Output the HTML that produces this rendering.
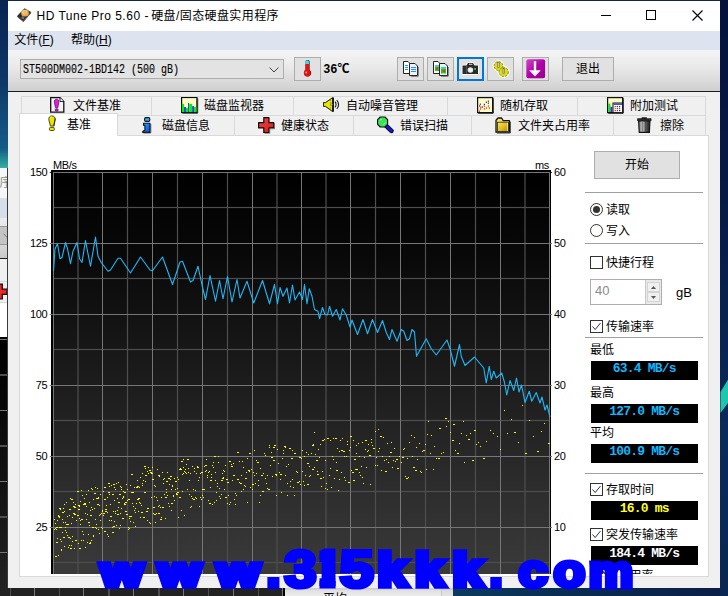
<!DOCTYPE html>
<html lang="zh-CN">
<head>
<meta charset="utf-8">
<title>HD Tune Pro 5.60 - 硬盘/固态硬盘实用程序</title>
<style>
html,body{margin:0;padding:0;}
body{width:728px;height:596px;overflow:hidden;position:relative;background:#0b1f45;font-family:"Liberation Sans","Noto Sans CJK SC",sans-serif;font-size:12px;color:#000;}
.abs{position:absolute;}
.t{position:absolute;white-space:nowrap;line-height:16px;height:16px;font-size:12px;}
#win{position:absolute;left:8px;top:0;width:712px;height:588px;background:#f0f0f0;overflow:hidden;}
#title{position:absolute;left:0;top:0;width:712px;height:31px;background:#fff;}
#menu{position:absolute;left:0;top:31px;width:712px;height:19px;background:#dde4ef;}
#tool{position:absolute;left:0;top:50px;width:712px;height:41px;background:linear-gradient(#f4f4f4,#eaeaea 40%,#cfcfcf);}
#toolline{position:absolute;left:0;top:91px;width:712px;height:1px;background:#1c1c1c;}
.tb{position:absolute;top:57px;width:25px;height:22px;border:1px solid #adadad;background:#e1e1e1;}
.tab{position:absolute;border:1px solid #d9d9d9;background:#f0f0f0;box-sizing:border-box;}
.lcd{position:absolute;left:582.5px;width:107.5px;height:19px;background:#000;text-align:center;overflow:hidden;}
.lcd span{display:inline-block;font-family:"Liberation Mono",monospace;font-weight:bold;font-size:13px;line-height:13px;letter-spacing:-0.8px;margin-top:1px;}
.sep{position:absolute;left:577px;width:118px;height:1px;background:#a0a0a0;}
.cb{position:absolute;left:582px;width:11px;height:11px;border:1px solid #333;background:#fff;}
.rb{position:absolute;left:582px;width:11px;height:11px;border:1px solid #333;border-radius:50%;background:#fff;}
</style>
</head>
<body>
<!-- desktop + background windows -->
<div class="abs" style="left:0;top:0;width:8px;height:168px;background:linear-gradient(#0a2450,#0c3566 45%,#155a86 88%,#2a9a9a 97%,#3ab0a8);"></div>
<div class="abs" style="left:0;top:168px;width:8px;height:30px;background:#f4f6f8;"></div>
<div class="abs" style="left:0;top:168px;width:8px;height:30px;overflow:hidden;"><div class="t" style="right:-3.5px;top:6.5px;color:#8c8c8c;">HD Tune Pro 5.60 - 硬盘/固态硬盘实用程序</div></div>
<div class="abs" style="left:0;top:198px;width:8px;height:20px;background:#d6deea;"></div>
<div class="abs" style="left:0;top:218px;width:8px;height:41px;background:linear-gradient(#ececec,#e2e2e2 40%,#c8c8c8);"></div>
<div class="abs" style="left:0;top:226px;width:8px;height:19px;background:#c4c4c4;border-top:1px solid #9a9a9a;border-bottom:1px solid #9a9a9a;box-sizing:border-box;"></div>
<svg class="abs" style="left:3px;top:233px;" width="5" height="6" viewBox="0 0 5 6"><path d="M0.5 0.8L5 5.2" fill="none" stroke="#777" stroke-width="1"/></svg>
<div class="abs" style="left:0;top:258px;width:8px;height:1px;background:#1c1c1c;"></div>
<div class="abs" style="left:0;top:259px;width:8px;height:44px;background:#f0f0f0;"></div>
<div class="abs" style="left:0;top:281px;width:8px;height:1px;background:#d9d9d9;"></div>
<div class="abs" style="left:0;top:302px;width:8px;height:1px;background:#d9d9d9;"></div>
<div class="abs" style="left:0;top:303px;width:8px;height:34px;background:#fff;"></div>
<svg class="abs" style="left:0;top:283px;" width="8" height="18" viewBox="0 0 8 18"><path d="M-2 1.2h4.3v5H7v5.2H2.3v4.6H-2z" fill="#e42828" stroke="#0a0a0a" stroke-width="1.2"/></svg>
<div class="abs" style="left:0;top:337px;width:8px;height:259px;background:linear-gradient(#000,#080808 31%,#232323);"></div>
<div class="abs" style="left:0;top:339px;width:8px;height:1px;background:#767676;"></div>
<div class="abs" style="left:0;top:374.4px;width:8px;height:1.2px;background:#4e4e4e;"></div>
<div class="abs" style="left:0;top:410px;width:8px;height:1px;background:#767676;"></div>
<div class="abs" style="left:0;top:445.4px;width:8px;height:1.2px;background:#4e4e4e;"></div>
<div class="abs" style="left:0;top:481px;width:8px;height:1px;background:#767676;"></div>
<div class="abs" style="left:0;top:516.4px;width:8px;height:1.2px;background:#4e4e4e;"></div>
<div class="abs" style="left:0;top:552px;width:8px;height:1px;background:#767676;"></div>
<div class="abs" style="left:7px;top:168px;width:1px;height:428px;background:#3a3a3a;"></div>
<!-- bottom strip -->
<div class="abs" style="left:0;top:588px;width:285px;height:8px;background:#222;"></div>
<div class="abs" style="left:9.9px;top:588px;width:1.2px;height:8px;background:#4e4e4e;"></div>
<div class="abs" style="left:34px;top:588px;width:1px;height:8px;background:#767676;"></div>
<div class="abs" style="left:58.9px;top:588px;width:1.2px;height:8px;background:#4e4e4e;"></div>
<div class="abs" style="left:83px;top:588px;width:1px;height:8px;background:#767676;"></div>
<div class="abs" style="left:108.4px;top:588px;width:1.2px;height:8px;background:#4e4e4e;"></div>
<div class="abs" style="left:133px;top:588px;width:1px;height:8px;background:#767676;"></div>
<div class="abs" style="left:158.4px;top:588px;width:1.2px;height:8px;background:#4e4e4e;"></div>
<div class="abs" style="left:183px;top:588px;width:1px;height:8px;background:#767676;"></div>
<div class="abs" style="left:207.9px;top:588px;width:1.2px;height:8px;background:#4e4e4e;"></div>
<div class="abs" style="left:233px;top:588px;width:1px;height:8px;background:#767676;"></div>
<div class="abs" style="left:257.6px;top:588px;width:1.2px;height:8px;background:#4e4e4e;"></div>
<div class="abs" style="left:282px;top:588px;width:1px;height:8px;background:#767676;"></div>
<div class="abs" style="left:283px;top:588px;width:2px;height:8px;background:#000;"></div>
<div class="abs" style="left:285px;top:588px;width:168px;height:8px;background:linear-gradient(#c8c8c8,#e2e2e2 35%,#ececec);overflow:hidden;"><div class="t" style="left:38px;top:3.2px;">平均</div></div>
<div class="abs" style="left:441px;top:588px;width:12px;height:8px;background:linear-gradient(#c4c4c4,#dcdcdc 35%,#e4e4e4);border-left:1px solid #c8c8c8;box-sizing:border-box;"></div>
<div class="abs" style="left:453px;top:588px;width:275px;height:8px;background:linear-gradient(90deg,#0b3a5c,#0a2a50 50%,#0a1e46);"></div>
<!-- right desktop strip -->
<div class="abs" style="left:720px;top:0;width:8px;height:596px;background:linear-gradient(#04123c,#071c48 40%,#0a2a5a 72%,#0a2652);"></div>
<svg class="abs" style="left:720px;top:360px;" width="8" height="60" viewBox="0 0 8 60"><polygon points="0.5,32 8,19.5 8,43 0.5,53" fill="#1fc6ae"/></svg>

<!-- main window -->
<div id="win">
  <div class="abs" style="left:0;top:0;width:712px;height:1px;background:#16284a;z-index:5;"></div>
  <div id="title">
    <svg class="abs" style="left:9px;top:7px;" width="16" height="16" viewBox="0 0 16 16">
      <polygon points="7.5,1.2 14.1,5.1 6.4,14.2 0.1,8.9" fill="#2c2c30"/>
      <polygon points="0.1,8.9 6.4,14.2 6.4,15 0.1,9.7" fill="#111"/>
      <polygon points="14.1,5.1 6.4,14.2 6.4,15 14.1,5.9" fill="#1a1a1a"/>
      <ellipse cx="8" cy="5.9" rx="3.9" ry="3.5" fill="#e8a840"/>
      <ellipse cx="7.6" cy="5.3" rx="2.6" ry="2.2" fill="#f6c870"/>
      <circle cx="8.1" cy="5.7" r="1.1" fill="#b8b8c0"/>
      <polygon points="5.2,9 7.6,10.2 6.4,12.4 4.2,11" fill="#77777c"/>
    </svg>
    <div class="t" style="left:28.5px;top:8px;"><span style="letter-spacing:0.5px;">HD Tune Pro 5.60 - </span><span style="letter-spacing:0.4px;margin-left:-1.5px;">硬盘/固态硬盘实用程序</span></div>
    <svg class="abs" style="left:593px;top:10px;" width="110" height="11" viewBox="0 0 110 11" fill="none" stroke="#000" stroke-width="1">
      <path d="M0 5.5H10"/>
      <rect x="45.5" y="0.5" width="9" height="9"/>
      <path d="M91.5 0.5L101.5 10.5M101.5 0.5L91.5 10.5" stroke-width="1.1"/>
    </svg>
  </div>
  <div id="menu">
    <div class="t" style="left:6.3px;top:1px;">文件(<u>F</u>)</div>
    <div class="t" style="left:63px;top:1px;">帮助(<u>H</u>)</div>
  </div>
  <div id="tool"></div>
  <div id="toolline"></div>
  <!-- combo -->
  <div class="abs" style="left:12px;top:59px;width:262px;height:18px;border:1px solid #adadad;background:#e3e3e3;">
    <div class="abs" style="left:2px;top:3px;height:14px;line-height:14px;font-family:'Liberation Mono',monospace;font-size:13px;white-space:nowrap;transform:scaleX(0.769);transform-origin:0 0;-webkit-text-stroke:0.12px #000;">ST500DM002-1BD142 (500 gB)</div>
    <svg class="abs" style="left:248px;top:7px;" width="10" height="6" viewBox="0 0 10 6"><path d="M0.5 0.5L5 5L9.5 0.5" fill="none" stroke="#444" stroke-width="1"/></svg>
  </div>
  <!-- temperature -->
  <div class="tb" style="left:286px;">
    <svg class="abs" style="left:8px;top:2px;" width="10" height="18" viewBox="0 0 10 18">
      <path d="M2.6 1.8a2 2 0 0 1 4 0V10a3.6 3.6 0 1 1-4 0z" fill="#1a1a1a"/>
      <path d="M2.4 1.6a1.9 1.9 0 0 1 3.6 0V4H2.4z" fill="#40d8e8"/>
      <rect x="2.4" y="4" width="3.6" height="7" fill="#e81010"/>
      <circle cx="4.2" cy="13" r="3.4" fill="#e81010"/>
      <circle cx="3.2" cy="12.4" r="0.9" fill="#ffb0b0"/>
    </svg>
  </div>
  <div class="t" style="left:315.5px;top:60.5px;font-weight:bold;font-size:12px;letter-spacing:0.35px;">36℃</div>
  <!-- toolbar buttons -->
  <div class="tb" style="left:389px;">
    <svg class="abs" style="left:5px;top:3px;" width="17" height="16" viewBox="0 0 17 16"><path d="M0.5 0.5h4.5l2 2v10h-6.5z" fill="#fff" stroke="#222"/><path d="M6.5 2.5h5.5l2.5 2.5v9.5h-8z" fill="#f2f2f2" stroke="#222"/><path d="M15.2 6v9.2H8" fill="none" stroke="#444" stroke-width="0.8"/><path d="M2 4.5h3M2 6.5h3M2 8.5h3M8 6.5h5M8 8.5h5M8 10.5h5" stroke="#1e90ff"/></svg>
  </div>
  <div class="tb" style="left:419px;">
    <svg class="abs" style="left:5px;top:3px;" width="17" height="16" viewBox="0 0 17 16"><path d="M0.5 0.5h4.5l2 2v10h-6.5z" fill="#fff" stroke="#222"/><path d="M6.5 2.5h5.5l2.5 2.5v9.5h-8z" fill="#f2f2f2" stroke="#222"/><path d="M15.2 6v9.2H8" fill="none" stroke="#444" stroke-width="0.8"/><rect x="2" y="4" width="4" height="1.5" fill="#30c8e8"/><rect x="2" y="5.5" width="4" height="4.5" fill="#30c030"/><rect x="3.2" y="6.5" width="1.8" height="2" fill="#e83020"/><rect x="8" y="6" width="5" height="1.5" fill="#30c8e8"/><rect x="8" y="7.5" width="5" height="5" fill="#30c030"/><rect x="9.8" y="8.8" width="2" height="2.2" fill="#e83020"/></svg>
  </div>
  <div class="tb" style="left:449px;border:2px solid #0078d7;width:23px;height:20px;">
    <svg class="abs" style="left:2px;top:2px;" width="19" height="14" viewBox="0 0 19 14"><path d="M1.5 4.5h4L7 2h5l1.5 2.5h3.5v8.5H1.5z" fill="#2a2a2a" stroke="#fff" stroke-width="1.6" stroke-linejoin="round"/><path d="M1.5 4.5h4L7 2h5l1.5 2.5h3.5v8.5H1.5z" fill="#2a2a2a"/><rect x="8" y="2.8" width="3.4" height="1" fill="#ddd"/><path d="M5.3 5v7.6" stroke="#777" stroke-width="0.6"/><circle cx="9.4" cy="9" r="2.8" fill="#e6e6e6"/><circle cx="9.4" cy="9" r="1.2" fill="#f8f8f8"/><rect x="13.2" y="7" width="1.8" height="1.8" fill="#20e040"/></svg>
  </div>
  <div class="tb" style="left:479px;">
    <svg class="abs" style="left:4px;top:2px;" width="18" height="18" viewBox="0 0 18 18"><g stroke="#fff" stroke-width="2.4" fill="#fff"><circle cx="6.5" cy="6" r="4.6"/><circle cx="11.7" cy="12" r="4.8"/></g><circle cx="6.5" cy="6" r="4.4" fill="#dcdc10" stroke="#8a8a00" stroke-width="1" stroke-dasharray="2.2 1.2"/><circle cx="11.7" cy="12" r="4.6" fill="#dcdc10" stroke="#8a8a00" stroke-width="1" stroke-dasharray="2.2 1.2"/><rect x="5.7" y="2.5" width="1.7" height="5" fill="#c8c8d8" stroke="#555" stroke-width="0.5"/><rect x="10.9" y="8.5" width="1.7" height="5" fill="#c8c8d8" stroke="#555" stroke-width="0.5"/></svg>
  </div>
  <div class="tb" style="left:514px;">
    <svg class="abs" style="left:3px;top:1px;" width="20" height="20" viewBox="0 0 20 20"><defs><linearGradient id="mg" x1="0" y1="0" x2="1" y2="1"><stop offset="0" stop-color="#d048c8"/><stop offset="0.5" stop-color="#b000a8"/><stop offset="1" stop-color="#98008e"/></linearGradient></defs><rect x="0.3" y="0.3" width="18.8" height="19" rx="2" fill="url(#mg)"/><rect x="7.8" y="2.2" width="2.4" height="11" fill="#fff"/><path d="M3.2 11.2h11.6L9 17.4z" fill="#fff"/></svg>
  </div>
  <div class="tb" style="left:554px;width:50px;"><div class="t" style="left:0;top:3px;width:50px;text-align:center;">退出</div></div>

  <!-- tabs row 1 -->
  <div class="tab" style="left:13px;top:96px;width:131px;height:20px;border-bottom:none;"></div>
  <div class="tab" style="left:143px;top:96px;width:143px;height:20px;border-bottom:none;"></div>
  <div class="tab" style="left:285px;top:96px;width:155px;height:20px;border-bottom:none;"></div>
  <div class="tab" style="left:439px;top:96px;width:131px;height:20px;border-bottom:none;"></div>
  <div class="tab" style="left:569px;top:96px;width:129px;height:20px;border-bottom:none;"></div>
  <!-- tabs row 2 -->
  <div class="tab" style="left:109px;top:115px;width:118px;height:21px;"></div>
  <div class="tab" style="left:226px;top:115px;width:120px;height:21px;"></div>
  <div class="tab" style="left:345px;top:115px;width:119px;height:21px;"></div>
  <div class="tab" style="left:463px;top:115px;width:143px;height:21px;"></div>
  <div class="tab" style="left:605px;top:115px;width:93px;height:21px;"></div>
  <!-- page -->
  <div class="abs" style="left:11px;top:135px;width:688px;height:440px;background:#fff;border:1px solid #d9d9d9;"></div>
  <!-- selected tab -->
  <div class="abs" style="left:11px;top:113px;width:99px;height:23px;background:#fff;border:1px solid #d9d9d9;border-bottom:none;box-sizing:border-box;"></div>

  <!-- tab labels row 1 -->
  <svg class="abs" style="left:42px;top:97px;" width="16" height="16" viewBox="0 0 16 16"><path d="M0.7 0.7h9.3l3.8 3.8v10.6h-13.1z" fill="#f4f4f4" stroke="#111" stroke-width="1.3"/><path d="M10 0.7v3.8h3.8" fill="#fff" stroke="#111" stroke-width="0.9"/><path d="M6.6 2.2c1.6 0 2.4 1.2 2.2 2.8l-1 5.6h-2.4l-1-5.6c-0.2-1.6 0.6-2.8 2.2-2.8z" fill="#e818e8" stroke="#500050" stroke-width="0.7"/><rect x="5.2" y="11.8" width="2.9" height="2.3" rx="0.8" fill="#e818e8" stroke="#500050" stroke-width="0.7"/></svg>
  <div class="t" style="left:65px;top:98px;">文件基准</div>
  <svg class="abs" style="left:173px;top:97px;" width="18" height="17" viewBox="0 0 18 17"><rect x="0.6" y="0.5" width="15.3" height="15" fill="#ffffc4" stroke="#080808" stroke-width="1.2"/><path d="M16.7 1.2v15H1.4" fill="none" stroke="#222" stroke-width="0.9"/><rect x="0.9" y="6.9" width="2.1" height="8.2" fill="#00f400"/><rect x="3" y="10" width="2" height="5.1" fill="#3c3cff"/><rect x="5" y="10.8" width="2" height="4.3" fill="#00f400"/><rect x="7" y="6" width="1.2" height="9.1" fill="#3c3cff"/><rect x="8.2" y="6.9" width="2.9" height="8.2" fill="#00f400"/><rect x="11.1" y="9.1" width="1.9" height="6" fill="#3c3cff"/><rect x="13" y="10" width="2.4" height="5.1" fill="#00f400"/></svg>
  <div class="t" style="left:196px;top:98px;">磁盘监视器</div>
  <svg class="abs" style="left:315px;top:97px;" width="17" height="16" viewBox="0 0 17 16"><path d="M0.4 5.6h2.2L9.6 0.6v14L2.6 9.4H0.4z" fill="#eaea00" stroke="#111" stroke-width="1" stroke-linejoin="round"/><path d="M10.3 0.4v14.4" stroke="#111" stroke-width="1.3"/><path d="M7.4 2.5v10.4" stroke="#555" stroke-width="0.6" stroke-dasharray="1.5 1"/><circle cx="8.6" cy="7.5" r="0.9" fill="#ddd" stroke="#333" stroke-width="0.4"/><path d="M12 4.6q2.2 2.9 0 5.8M13.8 3q3.6 4.5 0 9" fill="none" stroke="#1a1a1a" stroke-width="1.1"/></svg>
  <div class="t" style="left:338px;top:98px;">自动噪音管理</div>
  <svg class="abs" style="left:469px;top:97px;" width="17" height="17" viewBox="0 0 17 17"><rect x="0.6" y="0.6" width="15" height="15" fill="#fffcc4" stroke="#111" stroke-width="1.2"/><path d="M16.2 1.2v15H1.2" fill="none" stroke="#111" stroke-width="1"/><g fill="#1818f0"><rect x="2.8" y="6.6" width="1.2" height="1.2"/><rect x="4.8" y="9.4" width="1.2" height="1.2"/><rect x="6.8" y="6.8" width="1.2" height="1.2"/><rect x="8.8" y="4.6" width="1.2" height="1.2"/><rect x="10.8" y="3.6" width="1.2" height="1.2"/><rect x="10.8" y="5.6" width="1.2" height="1.2"/><rect x="2" y="8.4" width="1.2" height="1.2"/></g><g fill="#f01010"><rect x="1.8" y="13.6" width="1.2" height="1.2"/><rect x="2.8" y="11.4" width="1.2" height="1.2"/><rect x="3.2" y="9.6" width="1.2" height="1.2"/><rect x="6.8" y="11.4" width="1.2" height="1.2"/><rect x="6.8" y="8.6" width="1.2" height="1.2"/><rect x="8.8" y="10.4" width="1.2" height="1.2"/><rect x="10.8" y="8.4" width="1.2" height="1.2"/><rect x="11.8" y="10.4" width="1.2" height="1.2"/></g></svg>
  <div class="t" style="left:492px;top:98px;">随机存取</div>
  <svg class="abs" style="left:599px;top:97px;" width="17" height="17" viewBox="0 0 17 17"><rect x="0.6" y="0.6" width="15" height="15" fill="#fffcc4" stroke="#111" stroke-width="1.2"/><path d="M16.2 1.2v15H1.2" fill="none" stroke="#111" stroke-width="1"/><rect x="1.2" y="6.6" width="2.2" height="8.4" fill="#18e018"/><rect x="3.4" y="9.8" width="2" height="5.2" fill="#3030e8"/><rect x="6" y="6" width="9.6" height="9.6" fill="#fff" stroke="#111" stroke-width="1"/><rect x="6.5" y="6.5" width="8.6" height="1.4" fill="#2040e0"/><g fill="#f01010"><rect x="7.6" y="9" width="1.2" height="1.2"/><rect x="9.8" y="11" width="1.2" height="1.2"/><rect x="12" y="11" width="1.2" height="1.2"/><rect x="7.6" y="13" width="1.2" height="1.2"/><rect x="9.8" y="13" width="1.2" height="1.2"/></g><g fill="#1818f0"><rect x="9.8" y="9" width="1.2" height="1.2"/><rect x="12" y="9" width="1.2" height="1.2"/><rect x="12" y="13" width="1.2" height="1.2"/></g><rect x="7.6" y="11" width="1.2" height="1.2" fill="#10c010"/></svg>
  <div class="t" style="left:622px;top:98px;">附加测试</div>

  <!-- tab labels row 2 -->
  <svg class="abs" style="left:40px;top:115px;" width="9" height="17" viewBox="0 0 9 17"><path d="M3.9 0.9C6.2 0.9 7.3 2.6 7.1 4.6L5.6 11H2.4L0.8 4.6C0.6 2.6 1.7 0.9 3.9 0.9z" fill="#e6e600" stroke="#3a3a00" stroke-width="0.9"/><path d="M7.3 3.5L5.9 11.3" stroke="#222" stroke-width="0.9" fill="none"/><rect x="1.4" y="12.4" width="5" height="3.1" rx="1.1" fill="#e6e600" stroke="#3a3a00" stroke-width="0.9"/><path d="M2.4 3c0.3-1 1-1.3 1.6-1.3" stroke="#ffffa0" stroke-width="0.8" fill="none"/></svg>
  <div class="t" style="left:59px;top:116.5px;">基准</div>
  <svg class="abs" style="left:134px;top:117px;" width="11" height="17" viewBox="0 0 11 17"><defs><linearGradient id="ig" x1="0" y1="0" x2="1" y2="1"><stop offset="0" stop-color="#30a8ff"/><stop offset="1" stop-color="#0048e0"/></linearGradient></defs><rect x="2.6" y="0.6" width="5.2" height="3.8" rx="1.3" fill="#28b4ff" stroke="#111" stroke-width="1.1"/><path d="M1.5 6.2H8V15.4H0.8V14.2L2.9 13.2V8.2H1.5z" fill="url(#ig)" stroke="#111" stroke-width="1.1" stroke-linejoin="round"/><path d="M8.8 7v9H1.5" fill="none" stroke="#333" stroke-width="0.7"/></svg>
  <div class="t" style="left:154px;top:118px;">磁盘信息</div>
  <svg class="abs" style="left:249px;top:117px;" width="18" height="17" viewBox="0 0 18 17"><defs><linearGradient id="rg" x1="0" y1="0" x2="1" y2="1"><stop offset="0" stop-color="#f04848"/><stop offset="1" stop-color="#d81818"/></linearGradient></defs><path d="M6.8 0.7h5.2v5h4.8v5.2H12v4.6H6.8v-4.6H1.6V5.7h5.2z" fill="url(#rg)" stroke="#0a0a0a" stroke-width="1.2" stroke-linejoin="round"/><path d="M17.6 6.6v5.2h-4.8v4.6H7.6" fill="none" stroke="#555" stroke-width="0.6"/></svg>
  <div class="t" style="left:273px;top:118px;">健康状态</div>
  <svg class="abs" style="left:368px;top:116px;" width="18" height="18" viewBox="0 0 18 18"><path d="M10.2 9.8L15.4 14.8" stroke="#0a0a0a" stroke-width="4.6" stroke-linecap="round"/><path d="M10.2 9.8L15.4 14.8" stroke="#1414e6" stroke-width="2.6" stroke-linecap="round"/><polygon points="4.3,1 8.9,1 11.6,3.7 11.6,8.3 8.9,11 4.3,11 1.6,8.3 1.6,3.7" fill="#38e45a" stroke="#0a0a0a" stroke-width="1.1" stroke-linejoin="round"/><path d="M4 4.6L5.6 3M7.4 8.6L9.6 6.4" stroke="#d8ffd8" stroke-width="0.8"/></svg>
  <div class="t" style="left:392px;top:118px;">错误扫描</div>
  <svg class="abs" style="left:487px;top:117px;" width="17" height="17" viewBox="0 0 17 17"><defs><linearGradient id="fg" x1="0" y1="0" x2="1" y2="1"><stop offset="0" stop-color="#f8e470"/><stop offset="0.5" stop-color="#e4c020"/><stop offset="1" stop-color="#b08a00"/></linearGradient></defs><path d="M1 3.2L3 1h3.6l1.6 2.6H14.4V15.2H1z" fill="#f6e060" stroke="#111" stroke-width="1.3" stroke-linejoin="round"/><rect x="2.4" y="5.2" width="11" height="9.2" fill="url(#fg)" stroke="#222" stroke-width="0.8"/><path d="M12.4 5.6v8.6" stroke="#fff6c0" stroke-width="0.7"/><path d="M15.3 4.6v11.4H2" fill="none" stroke="#222" stroke-width="0.9"/></svg>
  <div class="t" style="left:510px;top:118px;">文件夹占用率</div>
  <svg class="abs" style="left:629px;top:117px;" width="15" height="17" viewBox="0 0 15 17"><defs><linearGradient id="tg" x1="0" y1="0" x2="1" y2="0"><stop offset="0" stop-color="#555"/><stop offset="0.3" stop-color="#d8d8d8"/><stop offset="0.45" stop-color="#9a9a9a"/><stop offset="0.8" stop-color="#3a3a3a"/><stop offset="1" stop-color="#222"/></linearGradient></defs><rect x="4.6" y="0.3" width="5.2" height="1.6" fill="#111"/><path d="M0.5 1.6h13.6v2.2H0.5z" fill="#2a2a2a" stroke="#111" stroke-width="0.6"/><path d="M1.6 4h11.4l-0.6 11.4H2.2z" fill="url(#tg)" stroke="#111" stroke-width="1.1"/><path d="M5.2 5v9.6M8.6 5v9.6" stroke="#333" stroke-width="0.6"/></svg>
  <div class="t" style="left:652px;top:118px;">擦除</div>

  <!-- right panel -->
  <div class="abs" style="left:586px;top:151px;width:84px;height:26px;border:1px solid #adadad;background:#e1e1e1;"><div class="t" style="left:0;top:5px;width:84px;text-align:center;">开始</div></div>
  <div class="sep" style="top:192px;"></div>
  <div class="rb" style="top:203px;"><div class="abs" style="left:2px;top:2px;width:7px;height:7px;border-radius:50%;background:#333;"></div></div>
  <div class="t" style="left:598px;top:202px;">读取</div>
  <div class="rb" style="top:224px;"></div>
  <div class="t" style="left:598px;top:223px;">写入</div>
  <div class="sep" style="top:243px;"></div>
  <div class="cb" style="top:256px;"></div>
  <div class="t" style="left:598px;top:255px;">快捷行程</div>
  <div class="abs" style="left:582px;top:279px;width:70px;height:24px;border:1px solid #adadad;background:#fff;">
    <div class="t" style="left:4px;top:3px;color:#8a8a8a;font-size:13px;">40</div>
    <div class="abs" style="left:54px;top:0;width:16px;height:24px;background:#e9e9e9;border-left:1px solid #c8c8c8;box-sizing:border-box;"></div><div class="abs" style="left:56px;top:2px;width:13px;height:10px;background:#f0f0f0;border:1px solid #d4d4d4;box-sizing:border-box;"><svg class="abs" style="left:3px;top:2.5px;" width="5" height="3" viewBox="0 0 5 3"><path d="M0 3L2.5 0L5 3z" fill="#555"/></svg></div>
    <div class="abs" style="left:56px;top:12px;width:13px;height:10px;background:#f0f0f0;border:1px solid #d4d4d4;box-sizing:border-box;"><svg class="abs" style="left:3px;top:2.5px;" width="5" height="3" viewBox="0 0 5 3"><path d="M0 0L2.5 3L5 0z" fill="#555"/></svg></div>
  </div>
  <div class="t" style="left:668px;top:285px;font-size:13px;">gB</div>
  <div class="cb" style="top:320px;"><svg class="abs" style="left:0;top:0;" width="11" height="11" viewBox="0 0 11 11"><path d="M1.5 5.5L4.2 8.5L9.5 2" fill="none" stroke="#333" stroke-width="1"/></svg></div>
  <div class="t" style="left:598px;top:319px;">传输速率</div>
  <div class="sep" style="top:337px;"></div>
  <div class="t" style="left:582px;top:342px;">最低</div>
  <div class="lcd" style="top:361px;"><span style="color:#12b6fc;">63.4 MB/s</span></div>
  <div class="t" style="left:582px;top:385px;">最高</div>
  <div class="lcd" style="top:404px;"><span style="color:#12b6fc;">127.0 MB/s</span></div>
  <div class="t" style="left:582px;top:425px;">平均</div>
  <div class="lcd" style="top:444px;"><span style="color:#12b6fc;">100.9 MB/s</span></div>
  <div class="sep" style="top:473px;"></div>
  <div class="cb" style="top:483px;"><svg class="abs" style="left:0;top:0;" width="11" height="11" viewBox="0 0 11 11"><path d="M1.5 5.5L4.2 8.5L9.5 2" fill="none" stroke="#333" stroke-width="1"/></svg></div>
  <div class="t" style="left:598px;top:482px;">存取时间</div>
  <div class="lcd" style="top:501px;"><span style="color:#ffff20;">16.0 ms</span></div>
  <div class="cb" style="top:528px;"><svg class="abs" style="left:0;top:0;" width="11" height="11" viewBox="0 0 11 11"><path d="M1.5 5.5L4.2 8.5L9.5 2" fill="none" stroke="#333" stroke-width="1"/></svg></div>
  <div class="t" style="left:598px;top:527px;">突发传输速率</div>
  <div class="lcd" style="top:546px;"><span style="color:#fff;">184.4 MB/s</span></div>
  <div class="abs" style="left:582px;top:566px;width:110px;height:7.5px;overflow:hidden;"><div class="cb" style="left:0;top:4px;"></div><div class="t" style="right:46.5px;top:1.5px;">CPU 占用率</div></div>
</div>

<!-- chart -->
<svg class="abs" style="left:0;top:0;" width="728" height="596" viewBox="0 0 728 596">
  <defs>
    <linearGradient id="cg" x1="0" y1="0" x2="0" y2="1"><stop offset="0" stop-color="#000"/><stop offset="0.2" stop-color="#080808"/><stop offset="1" stop-color="#3a3a3a"/></linearGradient>
    <clipPath id="cc"><rect x="52" y="171" width="499" height="403"/></clipPath>
  </defs>
  <rect x="51" y="170" width="500" height="404" fill="#000"/>
  <rect x="53" y="172" width="497" height="402" fill="url(#cg)"/>
  <g clip-path="url(#cc)">
<g fill="#4e4e4e">
<rect x="77.40" y="172" width="1.2" height="402" />
<rect x="126.90" y="172" width="1.2" height="402" />
<rect x="176.90" y="172" width="1.2" height="402" />
<rect x="226.90" y="172" width="1.2" height="402" />
<rect x="276.40" y="172" width="1.2" height="402" />
<rect x="325.40" y="172" width="1.2" height="402" />
<rect x="374.90" y="172" width="1.2" height="402" />
<rect x="424.90" y="172" width="1.2" height="402" />
<rect x="474.90" y="172" width="1.2" height="402" />
<rect x="524.40" y="172" width="1.2" height="402" />
<rect x="53" y="206.90" width="497" height="1.2" />
<rect x="53" y="277.90" width="497" height="1.2" />
<rect x="53" y="348.90" width="497" height="1.2" />
<rect x="53" y="419.90" width="497" height="1.2" />
<rect x="53" y="490.90" width="497" height="1.2" />
<rect x="53" y="561.90" width="497" height="1.2" />
</g>
<g fill="#767676" shape-rendering="crispEdges">
<rect x="53" y="172" width="1" height="402" />
<rect x="102" y="172" width="1" height="402" />
<rect x="152" y="172" width="1" height="402" />
<rect x="202" y="172" width="1" height="402" />
<rect x="252" y="172" width="1" height="402" />
<rect x="301" y="172" width="1" height="402" />
<rect x="350" y="172" width="1" height="402" />
<rect x="400" y="172" width="1" height="402" />
<rect x="450" y="172" width="1" height="402" />
<rect x="500" y="172" width="1" height="402" />
<rect x="549" y="172" width="1" height="402" />
<rect x="53" y="172" width="497" height="1" />
<rect x="53" y="243" width="497" height="1" />
<rect x="53" y="314" width="497" height="1" />
<rect x="53" y="385" width="497" height="1" />
<rect x="53" y="456" width="497" height="1" />
<rect x="53" y="527" width="497" height="1" />
</g>
  </g>
  <path d="M54 529h1M54 519h1M55 528h1M55 556h2M55 523h1M56 527h1M56 542h2M56 529h1M57 520h1M57 538h1M57 527h1M58 515h1M58 555h1M58 516h2M59 517h1M59 508h2M59 527h1M60 527h2M60 509h1M60 539h1M61 550h1M61 549h1M61 541h1M62 532h1M62 512h2M62 519h1M63 508h1M63 537h2M63 522h1M64 546h1M64 511h1M64 504h1M65 530h1M65 522h1M65 527h1M66 532h1M66 502h1M66 524h1M67 516h1M67 535h1M67 524h1M68 524h1M68 547h1M68 537h2M69 545h1M69 509h2M69 515h1M70 548h2M70 538h1M70 498h1M71 545h1M71 499h2M71 523h1M72 536h1M72 541h1M72 517h1M73 513h2M73 502h1M73 506h2M74 548h1M74 514h1M74 507h2M75 504h1M75 514h1M75 540h1M76 540h1M76 520h1M76 540h1M77 515h2M77 491h2M78 543h1M78 509h2M78 505h2M79 506h1M79 518h1M79 548h2M80 524h1M80 520h1M80 501h1M81 519h1M81 540h1M81 490h1M82 495h1M82 519h1M82 531h1M83 540h1M83 534h1M83 504h1M84 498h1M84 504h1M84 503h2M85 513h1M85 547h1M85 504h1M86 506h1M86 494h1M86 519h1M87 514h1M87 542h1M88 534h1M88 522h2M88 490h1M89 502h1M89 525h1M89 543h2M90 515h2M90 510h1M90 542h1M91 488h1M91 507h1M91 540h1M92 489h1M92 509h1M92 527h2M93 499h1M93 536h1M93 535h1M94 508h1M94 493h2M95 519h1M95 487h1M95 527h1M96 524h1M96 528h1M96 498h2M97 504h2M97 498h2M97 488h1M98 497h1M98 498h1M98 529h1M99 515h1M99 533h1M99 505h1M100 520h1M100 514h1M100 494h1M101 527h1M101 513h1M102 511h1M102 510h1M102 528h1M103 491h1M103 515h1M103 513h2M104 487h2M104 499h1M104 531h2M105 509h1M105 511h2M105 499h1M106 509h1M106 505h1M107 497h1M107 534h1M107 512h1M108 536h1M108 492h2M108 483h2M109 486h1M109 494h1M109 520h1M110 516h1M110 516h2M110 504h1M111 485h1M111 520h1M112 527h1M112 532h2M112 494h2M113 484h2M113 511h1M113 526h2M114 487h1M114 521h1M114 500h1M115 513h1M115 489h1M115 511h1M116 525h1M116 483h1M117 514h2M117 498h1M117 510h1M118 502h2M118 507h1M118 482h1M119 494h2M119 528h1M120 513h1M120 486h1M120 525h1M121 487h1M121 508h1M121 489h1M122 518h2M122 498h1M123 497h1M123 496h1M123 491h1M124 503h1M124 504h2M124 492h2M125 502h2M125 511h1M126 484h1M126 514h2M126 511h1M127 489h1M127 500h1M128 527h1M128 529h1M128 499h2M129 516h2M129 518h1M129 528h1M130 485h1M130 521h1M131 474h1M131 516h1M131 492h2M132 474h1M132 503h1M133 506h1M133 492h1M133 522h1M134 510h1M134 487h1M135 526h1M135 508h1M135 512h1M136 503h1M136 487h2M137 499h2M137 486h2M137 480h1M138 498h2M138 511h1M139 502h1M139 487h1M140 517h1M140 503h1M140 477h1M141 512h2M141 505h1M142 485h1M142 473h1M142 483h1M143 480h1M143 517h2M144 492h2M144 466h2M145 481h1M145 468h1M145 475h2M146 511h1M146 511h2M147 520h1M147 471h1M147 508h2M148 467h1M148 473h1M149 522h1M149 470h2M150 472h1M150 523h1M151 472h1M151 473h2M151 497h1M152 479h2M152 467h1M153 513h1M153 507h2M154 514h2M154 485h1M154 496h1M155 486h1M155 522h1M156 513h1M156 497h1M157 469h1M157 500h1M158 506h1M158 513h2M158 475h2M159 476h1M159 505h1M160 507h1M160 519h2M161 497h1M161 517h1M162 507h2M162 472h1M162 507h1M163 479h1M163 483h1M164 478h1M164 494h1M165 518h1M165 497h2M166 489h1M166 481h2M166 492h1M167 472h1M167 495h1M168 503h1M168 478h2M169 484h1M169 506h1M170 476h2M170 479h1M171 503h2M171 489h1M171 510h1M172 486h1M172 485h1M173 496h1M173 495h1M174 478h1M174 500h1M175 489h1M175 481h2M176 494h2M176 493h1M177 488h1M177 477h1M177 492h2M178 517h1M178 479h1M179 497h2M179 469h1M180 468h1M180 469h2M181 461h2M181 510h1M182 474h1M182 491h1M183 467h1M183 459h1M183 473h1M184 471h1M184 515h1M185 469h1M185 472h1M186 473h1M186 464h1M187 459h2M187 489h1M188 468h1M188 472h1M189 480h1M189 494h1M190 473h1M190 507h1M191 496h1M191 506h1M192 498h1M192 466h1M192 466h1M193 499h2M193 489h1M194 468h1M194 471h1M195 490h1M195 497h1M196 473h1M196 498h1M197 466h1M197 467h1M198 480h1M198 467h1M199 477h1M199 506h1M200 473h1M200 497h1M201 499h1M201 472h2M202 495h1M202 489h1M203 497h1M203 489h1M204 466h1M204 489h1M205 465h2M205 471h1M206 470h1M206 459h1M207 477h1M207 475h1M208 472h1M208 500h1M209 503h2M209 471h1M210 480h2M210 487h1M211 477h1M211 474h1M212 465h1M212 504h1M213 467h1M213 462h1M214 456h2M214 502h1M215 472h1M215 480h1M216 500h1M216 492h1M217 486h1M217 483h1M218 462h1M218 456h1M219 496h1M219 488h1M220 498h1M220 498h1M221 494h1M221 480h2M222 478h2M222 473h1M223 470h1M223 477h1M224 471h1M224 489h1M225 497h1M225 465h1M226 479h2M226 497h1M227 503h1M227 482h2M228 495h1M229 461h1M229 504h1M230 502h1M230 461h1M231 466h2M231 464h1M232 480h1M233 475h2M233 463h1M234 499h1M235 493h1M235 504h1M236 495h1M237 452h2M237 479h2M238 479h1M239 461h1M239 482h1M240 483h2M241 491h1M241 475h1M242 461h1M243 489h1M243 467h1M244 485h1M245 478h2M245 486h1M246 472h1M247 502h1M247 458h1M248 470h2M249 453h2M249 471h1M250 487h1M251 469h1M252 489h1M252 484h2M253 472h1M254 475h1M254 450h1M255 483h1M256 473h1M256 460h1M257 462h2M258 480h1M258 485h1M259 502h1M260 468h1M260 495h1M261 475h1M262 491h2M262 475h1M263 473h1M264 453h1M265 478h1M265 455h1M266 483h1M267 488h1M267 475h1M268 489h2M269 445h1M269 447h1M270 465h1M271 452h1M271 457h2M272 476h1M273 447h2M273 460h2M274 445h2M275 474h2M276 495h1M276 475h1M277 449h1M278 463h1M278 463h1M279 472h1M280 479h1M280 474h2M281 492h1M282 458h1M283 453h1M283 450h1M284 446h2M285 475h1M285 447h1M286 466h1M287 495h1M287 483h1M288 464h1M289 448h2M290 481h1M290 486h1M291 458h2M292 479h1M292 450h1M293 487h1M294 453h1M294 495h1M295 453h1M296 471h1M297 482h1M297 472h1M298 482h1M299 457h2M299 481h1M300 484h1M301 458h1M302 450h1M302 471h1M303 481h1M304 456h1M304 485h1M305 475h1M306 452h1M307 463h2M307 484h2M308 454h1M309 466h1M309 476h1M310 475h1M311 453h1M312 469h2M312 445h2M313 444h1M314 432h1M314 467h1M315 454h1M316 460h2M317 471h1M317 474h2M318 449h1M319 457h1M320 444h1M320 478h2M321 486h1M322 471h1M322 440h2M323 477h1M324 439h1M325 488h1M325 460h1M326 483h1M327 489h1M327 438h1M328 438h1M329 475h1M330 468h1M330 440h1M331 487h1M332 456h1M333 438h1M333 459h1M334 478h1M335 438h2M336 462h1M336 470h2M337 448h1M338 490h1M339 479h1M339 451h1M340 440h1M341 450h2M341 472h1M342 438h1M343 451h2M344 456h1M344 477h1M345 480h1M346 456h1M347 441h1M347 444h1M348 482h2M349 450h1M350 447h1M350 436h2M351 470h1M352 472h2M353 480h2M353 440h1M354 459h2M355 469h2M356 445h1M356 453h1M357 469h1M358 443h1M359 456h1M359 472h1M360 475h1M361 466h1M362 442h1M362 477h1M363 483h1M364 457h1M365 449h1M365 440h2M366 467h1M367 451h1M368 444h1M368 450h1M369 455h2M370 484h1M371 439h1M371 442h1M372 445h1M373 448h2M374 448h1M375 465h1M375 431h1M376 457h1M377 465h1M378 429h1M378 451h1M379 448h1M380 436h2M381 470h1M382 456h1M383 437h1M384 460h1M385 471h2M386 459h1M387 443h1M388 462h1M389 456h1M390 452h2M391 442h1M392 467h1M393 460h1M394 448h1M395 461h1M396 459h2M397 468h1M398 468h1M399 456h1M401 462h1M402 457h2M403 449h1M404 448h1M405 476h1M406 478h2M407 458h1M408 477h1M409 442h1M411 435h1M412 456h1M413 467h2M414 437h1M415 470h2M416 447h1M417 459h1M419 443h1M420 471h1M421 472h1M422 451h1M423 450h2M425 444h1M426 469h1M427 434h1M428 421h1M430 453h1M431 435h1M433 469h1M434 446h1M436 458h1M438 458h2M439 428h2M441 453h1M443 452h1M445 418h2M446 426h1M448 421h1M450 432h1M452 440h2M453 424h2M455 450h1M457 453h2M459 443h1M461 433h1M463 421h1M464 462h1M466 435h1M468 439h2M470 433h1M472 460h2M474 430h2M476 444h1M478 442h1M480 446h1M483 458h2M486 441h1M490 430h1M493 433h1M497 436h1M500 449h1M504 410h1M507 433h1M511 419h1M514 432h2M518 442h1M522 405h1M525 453h2M529 420h1M533 436h1M537 451h2M541 431h1M544 423h1M548 443h2" stroke="#ffff00" stroke-width="1" fill="none" shape-rendering="crispEdges" transform="translate(0,0.5)"/>
  <polyline points="53.50,271.25 55.00,248.75 57.50,243.75 60.00,258.75 62.00,257.50 65.50,242.50 67.50,248.75 70.50,263.75 73.00,251.25 77.00,242.50 79.50,258.75 82.00,262.50 85.50,240.50 87.50,251.25 90.50,266.25 95.50,237.00 98.00,256.25 101.25,262.50 108.00,271.25 110.50,270.00 118.00,258.25 120.50,258.25 130.50,273.00 140.50,257.00 150.00,270.00 152.50,270.75 162.50,257.00 172.50,284.50 180.00,262.00 182.50,261.25 190.50,282.00 193.00,280.50 198.00,266.25 202.00,285.00 205.50,299.50 210.00,275.50 215.50,301.25 219.50,280.50 223.00,298.75 227.50,276.50 232.00,302.00 237.00,279.50 240.00,298.00 247.00,281.25 253.75,303.00 262.50,280.50 269.50,303.75 274.50,284.50 277.50,303.75 280.00,287.50 283.00,296.25 287.00,288.00 289.50,303.00 292.50,285.00 295.00,300.00 299.50,292.00 302.50,299.50 304.50,284.50 307.00,303.75 309.25,288.75 312.00,296.25 314.50,309.50 318.00,311.25 319.50,318.75 322.50,307.50 325.00,314.50 327.50,315.00 329.50,306.25 332.50,316.25 336.25,309.50 340.00,320.00 342.50,308.75 346.25,315.00 350.00,327.00 352.00,320.00 357.50,334.50 363.00,319.50 367.50,333.75 372.50,319.50 377.50,332.50 382.50,320.50 386.25,332.50 389.50,339.50 392.00,329.50 397.00,341.25 401.25,329.50 403.75,331.25 407.00,340.50 409.50,338.75 412.00,329.50 414.50,332.00 416.50,356.25 426.25,338.75 431.25,348.75 436.25,355.00 447.00,340.00 450.00,348.75 454.50,366.25 459.50,344.50 461.25,356.25 465.00,365.50 474.50,357.00 483.75,368.00 486.25,383.00 489.25,366.25 491.25,379.50 493.75,371.25 496.25,378.00 501.75,373.00 504.50,382.50 506.75,395.00 510.00,380.50 513.75,390.50 516.50,378.00 519.00,392.00 521.50,385.00 525.00,402.50 529.25,391.25 531.75,401.25 536.25,392.50 540.00,403.00 542.00,397.00 545.00,410.00 547.00,405.00 550.00,417.00" fill="none" stroke="#20b6f6" stroke-width="1.12" stroke-linejoin="round"/>
  <g font-family="'Liberation Sans',sans-serif" font-size="11" fill="#000" letter-spacing="-0.35">
    <text x="53" y="168.5">MB/s</text>
    <text x="535" y="168.5">ms</text>
<text x="47.2" y="176" text-anchor="end">150</text>
<rect x="49.8" y="172" width="1.2" height="1" fill="#222"/>
<text x="47.2" y="247" text-anchor="end">125</text>
<rect x="49.8" y="243" width="3.2" height="1" fill="#767676"/>
<text x="47.2" y="318" text-anchor="end">100</text>
<rect x="49.8" y="314" width="3.2" height="1" fill="#767676"/>
<text x="47.2" y="389" text-anchor="end">75</text>
<rect x="49.8" y="385" width="3.2" height="1" fill="#767676"/>
<text x="47.2" y="460" text-anchor="end">50</text>
<rect x="49.8" y="456" width="3.2" height="1" fill="#767676"/>
<text x="47.2" y="531" text-anchor="end">25</text>
<rect x="49.8" y="527" width="3.2" height="1" fill="#767676"/>
<text x="554" y="176">60</text>
<rect x="551" y="172" width="1" height="1" fill="#222"/>
<text x="554" y="247">50</text>
<rect x="550" y="243" width="2" height="1" fill="#767676"/>
<text x="554" y="318">40</text>
<rect x="550" y="314" width="2" height="1" fill="#767676"/>
<text x="554" y="389">30</text>
<rect x="550" y="385" width="2" height="1" fill="#767676"/>
<text x="554" y="460">20</text>
<rect x="550" y="456" width="2" height="1" fill="#767676"/>
<text x="554" y="531">10</text>
<rect x="550" y="527" width="2" height="1" fill="#767676"/>
  </g>
  <!-- watermark -->
</svg>
<svg class="abs" style="left:0;top:0;will-change:transform;opacity:0.999;" width="728" height="596" viewBox="0 0 728 596">
  <clipPath id="c1"><rect x="319.5" y="540" width="16.1" height="56"/></clipPath>
  <g font-family="'Liberation Sans',sans-serif" font-weight="bold" font-size="57" fill="#0000ff" stroke="#0000ff" stroke-width="8" stroke-linejoin="miter" opacity="0.999">
<text stroke-width="8" transform="matrix(0.9398 0 0 0.7079 100.95 586.07)">w</text>
<text stroke-width="8" transform="matrix(0.9491 0 0 0.7079 158.50 586.07)">w</text>
<text stroke-width="8" transform="matrix(0.9491 0 0 0.7079 217.25 586.07)">w</text>
<text stroke-width="4" transform="matrix(1.0000 0 0 0.9500 265.50 587.00)">.</text>
<text stroke-width="4.5" transform="matrix(1.0242 0 0 0.9130 284.22 587.06)">3</text>
<g clip-path="url(#c1)"><text stroke-width="6" transform="matrix(1.0286 0 0 0.8728 310.91 586.28)">1</text></g>
<text stroke-width="4.5" transform="matrix(1.0848 0 0 0.9122 339.58 587.06)">5</text>
<text stroke-width="7" transform="matrix(0.9342 0 0 0.8104 377.50 586.47)">k</text>
<text stroke-width="7" transform="matrix(0.9211 0 0 0.8104 415.00 586.47)">k</text>
<text stroke-width="7" transform="matrix(0.9539 0 0 0.8104 452.50 586.47)">k</text>
<text stroke-width="4" transform="matrix(0.9583 0 0 0.9500 488.58 587.00)">.</text>
<text stroke-width="6" transform="matrix(0.9191 0 0 0.8056 518.42 587.08)">c</text>
<text stroke-width="6" transform="matrix(0.9122 0 0 0.8056 553.41 587.08)">o</text>
<text stroke-width="6.5" transform="matrix(0.8750 0 0 0.7676 588.75 586.60)">m</text>
  </g>
</svg>
</body>
</html>
